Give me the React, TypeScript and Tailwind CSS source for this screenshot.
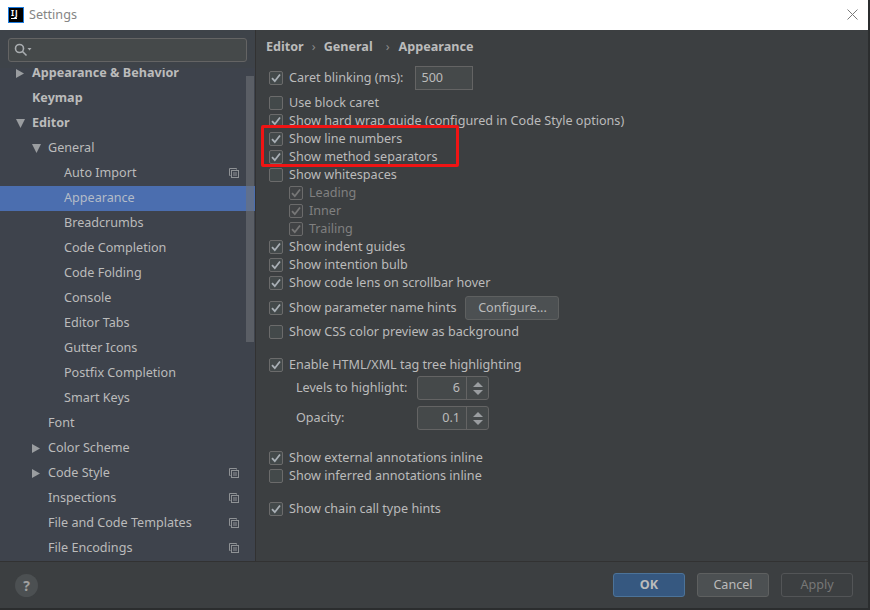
const FONT = "font-['Noto_Sans','Open_Sans',sans-serif]";

type NavItem = {
  label: string;
  indent: number;
  bold?: boolean;
  arrow?: 'open' | 'closed';
  copy?: boolean;
  selected?: boolean;
};

const navItems: NavItem[] = [
  { label: 'Keymap', indent: 32, bold: true },
  { label: 'Editor', indent: 32, bold: true, arrow: 'open' },
  { label: 'General', indent: 48, arrow: 'open' },
  { label: 'Auto Import', indent: 64, copy: true },
  { label: 'Appearance', indent: 64, selected: true },
  { label: 'Breadcrumbs', indent: 64 },
  { label: 'Code Completion', indent: 64 },
  { label: 'Code Folding', indent: 64 },
  { label: 'Console', indent: 64 },
  { label: 'Editor Tabs', indent: 64 },
  { label: 'Gutter Icons', indent: 64 },
  { label: 'Postfix Completion', indent: 64 },
  { label: 'Smart Keys', indent: 64 },
  { label: 'Font', indent: 48 },
  { label: 'Color Scheme', indent: 48, arrow: 'closed' },
  { label: 'Code Style', indent: 48, arrow: 'closed', copy: true },
  { label: 'Inspections', indent: 48, copy: true },
  { label: 'File and Code Templates', indent: 48, copy: true },
  { label: 'File Encodings', indent: 48, copy: true },
];

function CopyIcon() {
  return (
    <svg width="10" height="10" viewBox="0 0 10 10" fill="none" stroke="#8f9295" strokeWidth="1">
      <path d="M1.5 7.5h-1v-7h7v1" />
      <rect x="2.5" y="2.5" width="7" height="7" />
      <path d="M4 5h4M4 7h4" />
    </svg>
  );
}

function Arrow({ dir }: { dir: 'open' | 'closed' }) {
  return (
    <svg width="9" height="9" viewBox="0 0 9 9" fill="#9a9da0">
      {dir === 'open' ? <path d="M0 0h9L4.5 9z" /> : <path d="M0 0l8 4.5L0 9z" />}
    </svg>
  );
}

function Row({ item }: { item: NavItem }) {
  return (
    <div
      className={`relative flex h-[25px] shrink-0 items-center text-[12.6px] ${
        item.selected ? 'bg-[#4b6eaf]' : ''
      } ${item.bold ? 'font-bold' : ''}`}
      style={{ paddingLeft: item.indent }}
    >
      {item.arrow && (
        <span className="absolute top-[8px]" style={{ left: item.indent - 16 }}>
          <Arrow dir={item.arrow} />
        </span>
      )}
      <span className={item.selected ? 'text-[#b4bcc8]' : 'text-[#bbbbbb]'}>{item.label}</span>
      {item.copy && (
        <span className="absolute left-[229px] top-[7px] flex">
          <CopyIcon />
        </span>
      )}
    </div>
  );
}

function Check({ checked = false, dim = false }: { checked?: boolean; dim?: boolean }) {
  return (
    <span
      className={`flex h-[14px] w-[14px] shrink-0 items-center justify-center rounded-[2px] border border-[#6b6b6b] ${
        dim ? 'bg-[#414345]' : 'bg-[#43494a]'
      }`}
    >
      {checked && (
        <svg width="12" height="12" viewBox="0 0 12 12" fill="none" stroke={dim ? '#777777' : '#a9b0b6'} strokeWidth="1.8">
          <path d="M2 6.2l2.8 3L10 2.5" />
        </svg>
      )}
    </span>
  );
}

function Option({
  label,
  checked,
  dim,
  className = '',
  children,
}: {
  label: string;
  checked?: boolean;
  dim?: boolean;
  className?: string;
  children?: React.ReactNode;
}) {
  return (
    <div className={`flex h-[18px] items-center gap-[6px] text-[12.6px] ${className}`}>
      <Check checked={checked} dim={dim} />
      <span className={`whitespace-nowrap ${dim ? 'text-[#808080]' : 'text-[#bbbbbb]'}`}>{label}</span>
      {children}
    </div>
  );
}

function Spinner({ label, value, className = '' }: { label: string; value: string; className?: string }) {
  return (
    <div className={`flex h-[30px] items-center pl-[27px] text-[12.6px] text-[#bbbbbb] ${className}`}>
      <span className="w-[121px]">{label}</span>
      <div className="flex h-[24px] w-[72px] rounded-[3px] border border-[#646464] bg-[#45494a]">
        <span className="flex-1 pr-[6px] pt-[2px] text-right">{value}</span>
        <span className="flex w-[22px] flex-col items-center justify-center gap-[3px] border-l border-[#646464]">
          <svg width="10" height="5" viewBox="0 0 10 5" fill="#9a9da0">
            <path d="M5 0L10 5H0z" />
          </svg>
          <svg width="10" height="5" viewBox="0 0 10 5" fill="#9a9da0">
            <path d="M0 0h10L5 5z" />
          </svg>
        </span>
      </div>
    </div>
  );
}

function Button({ label, variant }: { label: string; variant: 'primary' | 'normal' | 'disabled' }) {
  const styles = {
    primary: 'border-[#4c7399] bg-[#365880] font-bold text-[#bbbbbb]',
    normal: 'border-[#5e6060] bg-[#4c5052] text-[#bbbbbb]',
    disabled: 'border-[#535557] bg-[#3c3f41] text-[#777777]',
  };
  return (
    <div
      className={`flex h-[24px] w-[72px] items-center justify-center rounded-[3px] border text-[12.6px] ${styles[variant]}`}
    >
      {label}
    </div>
  );
}

export default function App() {
  return (
    <div className={`flex h-[610px] w-[870px] flex-col overflow-hidden border-b-2 border-r-2 border-[#2b2d2e] bg-[#3c3f41] ${FONT}`}>
      {/* title bar */}
      <div className="flex h-[30px] shrink-0 items-center bg-white pb-[1px] pl-[8px] pr-[10px]">
        <span className="flex h-[16px] w-[16px] flex-col border border-[#1c7ce0] bg-black px-[2px] text-[8px] font-bold leading-[9px] tracking-[1px] text-white">
          IJ
          <span className="mt-[1px] h-px w-[6px] bg-white" />
        </span>
        <span className="ml-[5px] mt-[2px] text-[12.6px] text-[#858585]">Settings</span>
        <svg className="ml-auto" width="11" height="11" viewBox="0 0 11 11" stroke="#7a7a7a" strokeWidth="1">
          <path d="M0.5 0.5l10 10M10.5 0.5l-10 10" />
        </svg>
      </div>

      <div className="flex min-h-0 flex-1">
        {/* sidebar */}
        <div className="relative flex w-[256px] shrink-0 flex-col overflow-hidden border-r border-[#323232] bg-[#3e434c]">
          <div className="relative z-10 h-[38px] shrink-0 bg-[#3e4349] px-[8px] pt-[8px]">
            <div className="flex h-[24px] items-center rounded-[3px] border border-[#646464] bg-[#45494a] pl-[5px]">
              <svg width="18" height="14" viewBox="0 0 18 14" fill="none" stroke="#a9adb0" strokeWidth="1.6">
                <circle cx="5.5" cy="5.5" r="4" />
                <path d="M8.5 8.5l4 4" />
                <path d="M13.5 5h4l-2 2.5z" fill="#a9adb0" stroke="none" />
              </svg>
            </div>
          </div>
          <div className="-mt-[7px] flex flex-col">
            <Row item={{ label: 'Appearance & Behavior', indent: 32, bold: true, arrow: 'closed' }} />
            {navItems.map((item) => (
              <Row key={item.label} item={item} />
            ))}
          </div>
          {/* scrollbar */}
          <div className="absolute left-[246px] top-[46px] z-20 h-[266px] w-[8px] bg-[#6e7277]/60" />
        </div>

        {/* content */}
        <div className="flex min-w-0 flex-1 flex-col pl-[13px] pt-[8px]">
          <div className="-ml-[3px] flex h-[18px] items-center text-[12.6px] font-bold text-[#bbbbbb]">
            Editor
            <span className="ml-[8px] mr-[8px] font-normal text-[#8a8a8a]">›</span>
            General
            <span className="ml-[13px] mr-[9px] font-normal text-[#8a8a8a]">›</span>
            Appearance
          </div>
          <div className="relative mt-[10px] flex flex-col">
            <Option label="Caret blinking (ms):" checked className="h-[24px]">
              <span className="ml-[6px] flex h-[24px] w-[58px] items-center border border-[#646464] bg-[#45494a] pl-[5px] text-[12.6px] text-[#bbbbbb]">
                500
              </span>
            </Option>
            <Option label="Use block caret" className="mt-[4px]" />
            <Option label="Show hard wrap guide (configured in Code Style options)" checked />
            <Option label="Show line numbers" checked />
            <Option label="Show method separators" checked />
            <Option label="Show whitespaces" />
            <div className="flex flex-col pl-[20px]">
              <Option label="Leading" checked dim />
              <Option label="Inner" checked dim />
              <Option label="Trailing" checked dim />
            </div>
            <Option label="Show indent guides" checked />
            <Option label="Show intention bulb" checked />
            <Option label="Show code lens on scrollbar hover" checked />
            <Option label="Show parameter name hints" checked className="h-[32px]">
              <span className="ml-[3px] flex h-[24px] w-[94px] items-center justify-center rounded-[3px] border border-[#5e6060] bg-[#4c5052] text-[#bbbbbb]">
                Configure...
              </span>
            </Option>
            <Option label="Show CSS color preview as background" className="-mt-[1px]" />
            <Option label="Enable HTML/XML tag tree highlighting" checked className="mt-[15px]" />
            <Spinner label="Levels to highlight:" value="6" className="-mt-[1px]" />
            <Spinner label="Opacity:" value="0.1" />
            <Option label="Show external annotations inline" checked className="mt-[16px]" />
            <Option label="Show inferred annotations inline" />
            <Option label="Show chain call type hints" checked className="mt-[15px]" />
            {/* red annotation drawn on the screenshot */}
            <div className="absolute left-[-8px] top-[59px] h-[42px] w-[198px] rounded-[2px] border-[3px] border-[#f01414]" />
          </div>
        </div>
      </div>

      {/* footer */}
      <div className="flex h-[47px] shrink-0 items-center border-t border-[#323232] pl-[15px] pr-[15px]">
        <span className="flex h-[23px] w-[23px] items-center justify-center rounded-full bg-[#4c5052] text-[14px] font-bold text-[#a0a0a0]">
          ?
        </span>
        <div className="ml-auto flex gap-[12px]">
          <Button label="OK" variant="primary" />
          <Button label="Cancel" variant="normal" />
          <Button label="Apply" variant="disabled" />
        </div>
      </div>
    </div>
  );
}
